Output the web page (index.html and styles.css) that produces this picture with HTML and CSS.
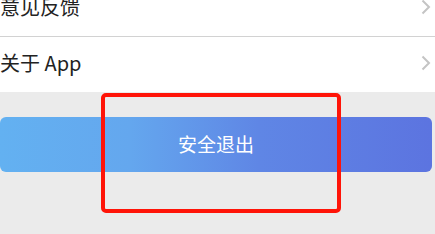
FILE: index.html
```html
<!DOCTYPE html>
<html lang="zh">
<head>
<meta charset="utf-8">
<link rel="stylesheet" href="styles.css">
</head>
<body>
<div class="page">
  <div class="list">
    <div class="row row-first">
      <span class="label">意见反馈</span>
      <svg class="chev" viewBox="0 0 10 16" width="10" height="16"><polyline points="1.5,1.5 8,8 1.5,14.5" fill="none" stroke="#c4c4c4" stroke-width="2"/></svg>
    </div>
    <div class="row">
      <span class="label">关于 App</span>
      <svg class="chev" viewBox="0 0 10 16" width="10" height="16"><polyline points="1.5,1.5 8,8 1.5,14.5" fill="none" stroke="#c4c4c4" stroke-width="2"/></svg>
    </div>
  </div>
  <div class="logout-area">
    <button class="logout">安全退出</button>
  </div>
  <div class="highlight"></div>
</div>
</body>
</html>
```
FILE: styles.css
```css
html, body {
  margin: 0;
  padding: 0;
  background: #ebebeb;
  overflow: hidden;
}
.page {
  position: relative;
  display: flow-root;
  width: 435px;
  height: 234px;
  font-family: "Noto Sans CJK SC", "Noto Sans", sans-serif;
}
.list {
  background: #fff;
  margin-top: -19px;
}
.row {
  display: flex;
  align-items: center;
  justify-content: space-between;
  box-sizing: border-box;
  height: 55px;
  padding: 0 4px 3px 0;
  color: #222;
  font-size: 20px;
}
.row-first {
  height: 56px;
  border-bottom: 1px solid #d2d2d2;
}
.label {
  line-height: 1;
}
.chev {
  display: block;
}
.logout-area {
  padding: 25px 3px 0 0;
}
.logout {
  display: block;
  width: 100%;
  height: 55px;
  border: none;
  border-radius: 6px;
  background: linear-gradient(90deg, #63b1f1 0%, #64a7ee 30%, #5f86e5 60%, #5c74e0 100%);
  color: #fff;
  font-family: "Noto Sans CJK SC", "Noto Sans", sans-serif;
  font-size: 19px;
  padding: 0 0 2px 0;
}
.highlight {
  position: absolute;
  left: 101px;
  top: 93px;
  width: 232px;
  height: 112px;
  border: 4px solid #ff1408;
  border-radius: 5px;
}
```
